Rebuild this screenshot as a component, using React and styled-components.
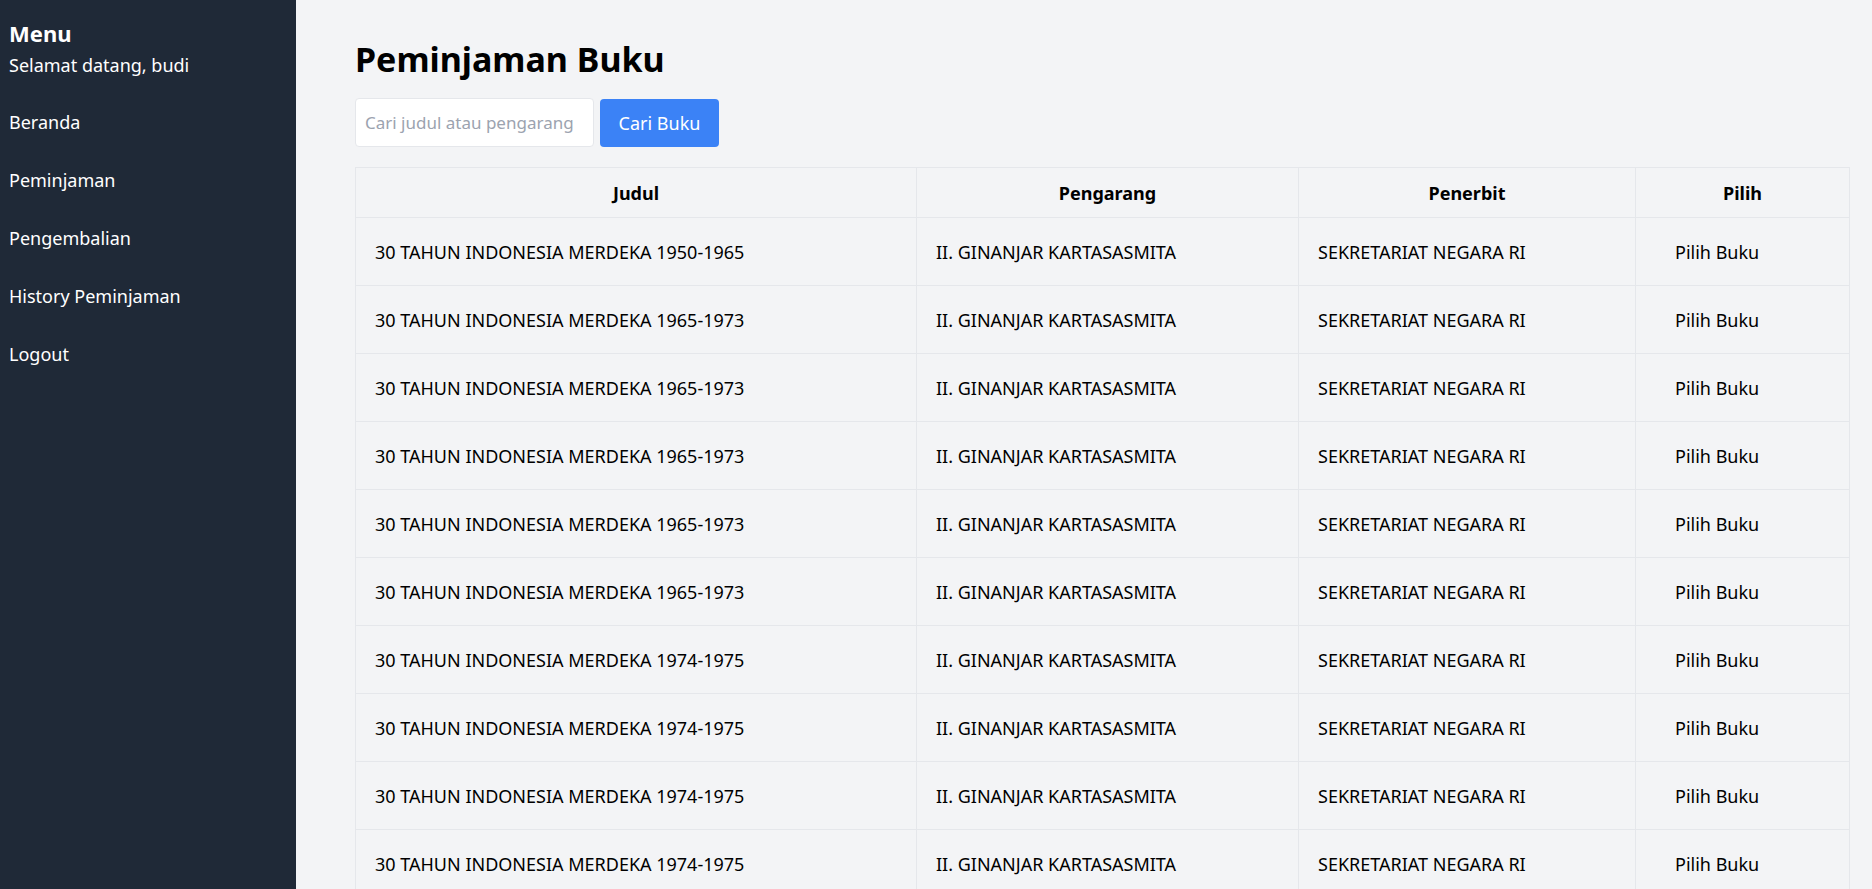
import React, { useState } from "react";
import styled, { createGlobalStyle } from "styled-components";

const GlobalStyle = createGlobalStyle`
  html, body {
    margin: 0;
    padding: 0;
    overflow: hidden;
    background: #f3f4f6;
  }
  * {
    box-sizing: border-box;
  }
  body {
    font-family: "Noto Sans", "Open Sans", sans-serif;
  }
`;

const books = [
  { judul: "30 TAHUN INDONESIA MERDEKA 1950-1965" },
  { judul: "30 TAHUN INDONESIA MERDEKA 1965-1973" },
  { judul: "30 TAHUN INDONESIA MERDEKA 1965-1973" },
  { judul: "30 TAHUN INDONESIA MERDEKA 1965-1973" },
  { judul: "30 TAHUN INDONESIA MERDEKA 1965-1973" },
  { judul: "30 TAHUN INDONESIA MERDEKA 1965-1973" },
  { judul: "30 TAHUN INDONESIA MERDEKA 1974-1975" },
  { judul: "30 TAHUN INDONESIA MERDEKA 1974-1975" },
  { judul: "30 TAHUN INDONESIA MERDEKA 1974-1975" },
  { judul: "30 TAHUN INDONESIA MERDEKA 1974-1975" },
  { judul: "30 TAHUN INDONESIA MERDEKA 1974-1975" },
].map((b) => ({
  ...b,
  pengarang: "II. GINANJAR KARTASASMITA",
  penerbit: "SEKRETARIAT NEGARA RI",
}));

const menu = ["Beranda", "Peminjaman", "Pengembalian", "History Peminjaman", "Logout"];

const App = () => {
  const [keyword, setKeyword] = useState("");

  return (
    <>
      <GlobalStyle />
      <Layout>
        <Sidebar>
          <MenuTitle>Menu</MenuTitle>
          <Welcome>Selamat datang, budi</Welcome>
          <NavList>
            {menu.map((m) => (
              <NavItem key={m}>{m}</NavItem>
            ))}
          </NavList>
        </Sidebar>
        <Main>
          <Title>Peminjaman Buku</Title>
          <SearchRow>
            <SearchInput
              placeholder="Cari judul atau pengarang"
              value={keyword}
              onChange={(e) => setKeyword(e.target.value)}
            />
            <SearchButton>Cari Buku</SearchButton>
          </SearchRow>
          <Table>
            <thead>
              <tr>
                <Th width={561}>Judul</Th>
                <Th width={382}>Pengarang</Th>
                <Th width={337}>Penerbit</Th>
                <Th>Pilih</Th>
              </tr>
            </thead>
            <tbody>
              {books.map((b, i) => (
                <tr key={i}>
                  <Td>{b.judul}</Td>
                  <Td>{b.pengarang}</Td>
                  <Td>{b.penerbit}</Td>
                  <Td>
                    <PickButton>Pilih Buku</PickButton>
                  </Td>
                </tr>
              ))}
            </tbody>
          </Table>
        </Main>
      </Layout>
    </>
  );
};

export default App;

const Layout = styled.div`
  display: flex;
  min-height: 100vh;
`;

const Sidebar = styled.aside`
  width: 296px;
  flex-shrink: 0;
  background: #1f2937;
  color: #ffffff;
  padding: 18px 9px;
`;

const MenuTitle = styled.h2`
  margin: 0;
  font-size: 22px;
  font-weight: 700;
  line-height: 30px;
`;

const Welcome = styled.p`
  margin: 0;
  font-size: 18px;
  line-height: 34px;
`;

const NavList = styled.ul`
  list-style: none;
  margin: 11px 0 0;
  padding: 0;
`;

const NavItem = styled.li`
  font-size: 18px;
  line-height: 28px;
  padding: 15px 0;
  cursor: pointer;
`;

const Main = styled.main`
  flex: 1;
  padding: 38px 22px 0 59px;
`;

const Title = styled.h1`
  margin: 0;
  font-size: 34px;
  font-weight: 700;
  line-height: 42px;
  color: #000;
`;

const SearchRow = styled.div`
  display: flex;
  align-items: flex-start;
  gap: 6px;
  margin-top: 18px;
`;

const SearchInput = styled.input`
  width: 239px;
  height: 49px;
  padding: 0 9px;
  border: 1px solid #e5e7eb;
  border-radius: 4px;
  background: #ffffff;
  font-family: inherit;
  font-size: 17px;
  outline: none;

  &::placeholder {
    color: #9ca3af;
  }
`;

const SearchButton = styled.button`
  width: 119px;
  height: 48px;
  margin-top: 1px;
  border: none;
  border-radius: 4px;
  background: #3b82f6;
  color: #ffffff;
  font-family: inherit;
  font-size: 18px;
  cursor: pointer;
`;

const Table = styled.table`
  width: 100%;
  margin-top: 20px;
  border-collapse: collapse;
  table-layout: fixed;
  border: 1px solid #e5e7eb;
`;

const Th = styled.th`
  width: ${(p) => (p.width ? `${p.width}px` : "auto")};
  height: 50px;
  border: 1px solid #e5e7eb;
  font-size: 18px;
  font-weight: 700;
  text-align: center;
`;

const Td = styled.td`
  height: 68px;
  padding: 0 19px;
  border: 1px solid #e5e7eb;
  font-size: 18px;
  color: #000;
`;

const PickButton = styled.button`
  padding: 0 20px;
  border: none;
  background: transparent;
  font-family: inherit;
  font-size: 18px;
  color: #000;
  cursor: pointer;
`;
